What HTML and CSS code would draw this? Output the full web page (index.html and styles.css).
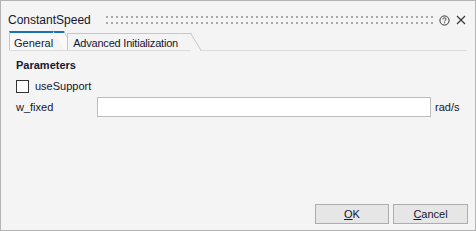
FILE: index.html
```html
<!DOCTYPE html>
<html>
<head>
<meta charset="utf-8">
<link rel="stylesheet" href="styles.css">
</head>
<body>
<div class="window">
  <div class="titlebar">
    <span class="title">ConstantSpeed</span>
    <div class="grip"></div>
    <svg class="help" width="11" height="11" viewBox="0 0 11 11">
      <circle cx="5.5" cy="5.5" r="4.6" fill="none" stroke="#333" stroke-width="1"/>
      <path d="M3.9 4.4 C3.9 3.4 4.6 2.9 5.5 2.9 C6.4 2.9 7.1 3.4 7.1 4.2 C7.1 5.1 5.6 5.2 5.6 6.4" fill="none" stroke="#333" stroke-width="1"/>
      <rect x="5.1" y="7.3" width="1" height="1" fill="#333"/>
    </svg>
    <svg class="close" width="10" height="10" viewBox="0 0 10 10">
      <path d="M1 1 L9 9 M9 1 L1 9" stroke="#333" stroke-width="1.1" fill="none"/>
    </svg>
  </div>
  <div class="tabbar">
    <div class="tab active"><span>General</span></div>
    <div class="tab"><span>Advanced Initialization</span></div>
  </div>
  <div class="pane">
    <div class="group-title">Parameters</div>
    <label class="check-row"><span class="checkbox"></span><span>useSupport</span></label>
    <div class="field-row">
      <span class="field-label">w_fixed</span>
      <input class="field-input" type="text">
      <span class="unit">rad/s</span>
    </div>
  </div>
  <div class="buttons">
    <button class="btn"><u>O</u>K</button>
    <button class="btn"><u>C</u>ancel</button>
  </div>
</div>
</body>
</html>
```

FILE: styles.css
```css
html, body {
  margin: 0;
  padding: 0;
  background: #f4f4f4;
}
body {
  font-family: "Liberation Sans", Arial, sans-serif;
  color: #16162e;
}
.window {
  box-sizing: border-box;
  width: 476px;
  height: 231px;
  border: 1px solid #b3b3b3;
  background: #f4f4f4;
  display: flex;
  flex-direction: column;
}
.titlebar {
  display: flex;
  align-items: center;
  height: 22px;
  margin-top: 8px;
  padding: 0 9px 0 7px;
}
.title {
  font-size: 12px;
  line-height: 14px;
}
.grip {
  flex: 1;
  height: 8px;
  margin: 0 6px 0 15px;
  background:
    linear-gradient(90deg, transparent 0 2px, #f4f4f4 2px),
    linear-gradient(180deg, transparent 0 2px, #f4f4f4 2px),
    #a9a9a9;
  background-size: 5px 6px;
}
.help {
  margin-right: 6px;
}
.tabbar {
  display: flex;
  align-items: flex-start;
  height: 19px;
  margin: 0 8px 0 8px;
  border-bottom: 1px solid #dcdcdc;
  gap: 14px;
}
.tab {
  position: relative;
  box-sizing: border-box;
  padding: 3px 2px 0 5px;
  margin-top: 2px;
  height: 17px;
  border-left: 1px solid #c6c6c6;
  border-top: 1px solid #c6c6c6;
  background: #f4f4f4;
  font-size: 11px;
  line-height: 13px;
  letter-spacing: -0.2px;
}
.tab::after {
  content: "";
  position: absolute;
  top: -1px;
  right: -11px;
  width: 11px;
  height: 18px;
  border-top: 1px solid #c6c6c6;
  border-right: 1px solid #c6c6c6;
  background: inherit;
  transform-origin: top left;
  transform: skewX(31deg);
  box-sizing: border-box;
}
.tab span {
  position: relative;
  z-index: 1;
}
.tab.active {
  margin-top: 0;
  height: 19px;
  padding: 4px 0 0 4px;
  border-top: 2px solid #1a73b8;
  background: #f9f9f9;
  letter-spacing: 0;
}
.tab.active::after {
  top: -2px;
  height: 19px;
  border-top: 2px solid #1a73b8;
}
.pane {
  flex: 1;
  display: flex;
  flex-direction: column;
  padding: 7px 15px 0 15px;
  font-size: 11px;
}
.group-title {
  font-weight: bold;
  line-height: 15px;
}
.check-row {
  display: flex;
  align-items: center;
  gap: 6px;
  margin-top: 6px;
  line-height: 14px;
}
.checkbox {
  box-sizing: border-box;
  width: 13px;
  height: 13px;
  border: 1px solid #333;
  background: #fff;
}
.field-row {
  display: flex;
  align-items: center;
  margin-top: 4px;
}
.field-label {
  width: 81px;
}
.field-input {
  box-sizing: border-box;
  width: 334px;
  height: 20px;
  margin: 0;
  border: 1px solid #bdbdbd;
  background: #fff;
  outline: none;
}
.unit {
  margin-left: 4px;
}
.buttons {
  display: flex;
  justify-content: flex-end;
  gap: 4px;
  padding: 0 7px 6px 0;
}
.btn {
  box-sizing: border-box;
  width: 74px;
  height: 20px;
  margin: 0;
  padding: 0;
  border: 1px solid #adadad;
  background: #e6e6e6;
  font-family: "Liberation Sans", Arial, sans-serif;
  font-size: 11px;
  color: #16162e;
}
.btn + .btn {
  width: 75px;
}
```
